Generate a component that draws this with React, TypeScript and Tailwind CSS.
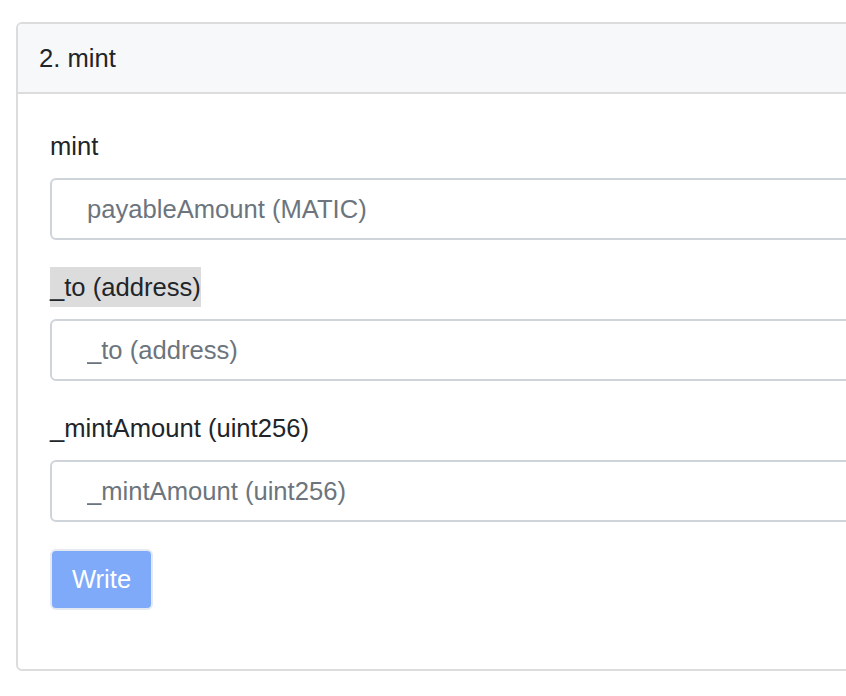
import { useState } from 'react';

const fields = [
  { label: 'mint', placeholder: 'payableAmount (MATIC)' },
  { label: '_to (address)', placeholder: '_to (address)' },
  { label: '_mintAmount (uint256)', placeholder: '_mintAmount (uint256)' },
];

const App = () => {
  const [values, setValues] = useState<Record<string, string>>({});

  return (
    <div
      className="w-[846px] h-[696px] overflow-hidden bg-white text-[#212529]"
      style={{ fontFamily: '"Liberation Sans", Arial, sans-serif' }}
    >
      <div className="ml-[16px] mt-[22px] w-[900px] rounded-[6px] border-2 border-[#dcdcdc] overflow-hidden">
        {/* Card header */}
        <div className="h-[70px] bg-[#f7f8f9] border-b-2 border-[#dcdcdc] flex items-center pl-[21px] text-[25.6px]">
          2. mint
        </div>

        {/* Card body */}
        <div className="pt-[32px] pl-[32px] pb-[59px]">
          {fields.map((f, i) => (
            <div key={f.placeholder} className={i > 0 ? 'mt-[27px]' : ''}>
              <label
                className={`inline-block h-[40px] leading-[40px] text-[25.6px] ${
                  i === 1 ? 'bg-[#dcdcdc]' : ''
                }`}
              >
                {f.label}
              </label>
              <input
                className="mt-[12px] block w-[840px] h-[62px] rounded-[6px] border-2 border-[#ced4da] pl-[35px] text-[25.6px] text-[#495057] placeholder:text-[#6c757d] outline-none"
                placeholder={f.placeholder}
                value={values[f.placeholder] ?? ''}
                onChange={(e) => setValues({ ...values, [f.placeholder]: e.target.value })}
              />
            </div>
          ))}

          <button
            disabled
            className="mt-[27px] h-[61px] w-[103px] rounded-[6px] border-2 border-[#e4e9f2] bg-[#7eaaf9] text-white text-[25.6px]"
          >
            Write
          </button>
        </div>
      </div>
    </div>
  );
};

export default App;
